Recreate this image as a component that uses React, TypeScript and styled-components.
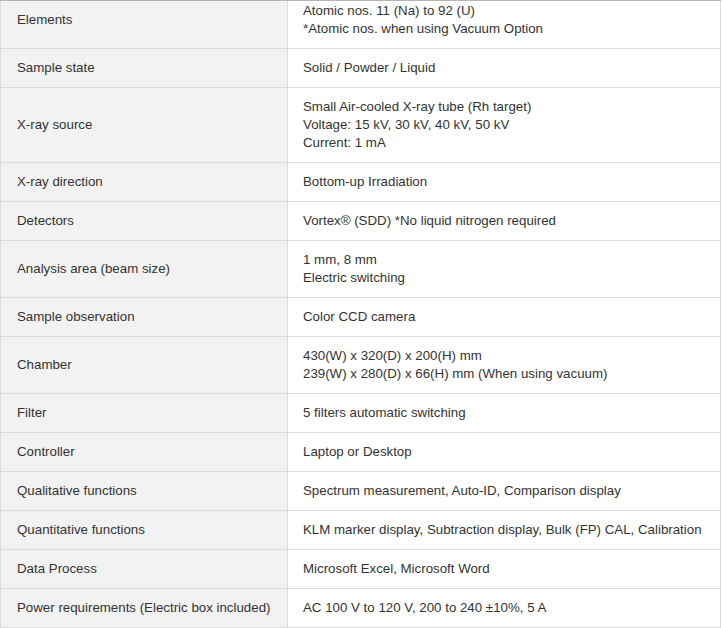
import React, { FC } from 'react';
import styled, { createGlobalStyle } from 'styled-components';

type Spec = {
  label: string;
  lines: string[];
};

const specs: Spec[] = [
  { label: 'Elements', lines: ['Atomic nos. 11 (Na) to 92 (U)', '*Atomic nos. when using Vacuum Option'] },
  { label: 'Sample state', lines: ['Solid / Powder / Liquid'] },
  {
    label: 'X-ray source',
    lines: ['Small Air-cooled X-ray tube (Rh target)', 'Voltage: 15 kV, 30 kV, 40 kV, 50 kV', 'Current: 1 mA'],
  },
  { label: 'X-ray direction', lines: ['Bottom-up Irradiation'] },
  { label: 'Detectors', lines: ['Vortex® (SDD) *No liquid nitrogen required'] },
  { label: 'Analysis area (beam size)', lines: ['1 mm, 8 mm', 'Electric switching'] },
  { label: 'Sample observation', lines: ['Color CCD camera'] },
  {
    label: 'Chamber',
    lines: ['430(W) x 320(D) x 200(H) mm', '239(W) x 280(D) x 66(H) mm (When using vacuum)'],
  },
  { label: 'Filter', lines: ['5 filters automatic switching'] },
  { label: 'Controller', lines: ['Laptop or Desktop'] },
  { label: 'Qualitative functions', lines: ['Spectrum measurement, Auto-ID, Comparison display'] },
  {
    label: 'Quantitative functions',
    lines: ['KLM marker display, Subtraction display, Bulk (FP) CAL, Calibration'],
  },
  { label: 'Data Process', lines: ['Microsoft Excel, Microsoft Word'] },
  { label: 'Power requirements (Electric box included)', lines: ['AC 100 V to 120 V, 200 to 240 ±10%, 5 A'] },
];

const GlobalStyle = createGlobalStyle`
  body {
    margin: 0;
    background: #fff;
    font-family: "Liberation Sans", Arial, sans-serif;
  }
`;

export default function App() {
  return (
    <>
      <GlobalStyle />
      <SpecTable specs={specs} />
    </>
  );
}

const SpecTable: FC<{ specs: Spec[] }> = ({ specs: rows }) => (
  <Frame>
    <Table>
      <colgroup>
        <LabelCol />
        <col />
      </colgroup>
      <tbody>
        {rows.map((row) => (
          <Row key={row.label}>
            <HeadCell>{row.label}</HeadCell>
            <Cell>
              {row.lines.map((line, i) => (
                // eslint-disable-next-line react/no-array-index-key
                <React.Fragment key={i}>
                  {i > 0 && <br />}
                  {line}
                </React.Fragment>
              ))}
            </Cell>
          </Row>
        ))}
      </tbody>
    </Table>
  </Frame>
);

const Frame = styled.div`
  width: 721px;
  border-top: 1px solid #b4b4b4;
`;

const Table = styled.table`
  width: 100%;
  border-collapse: collapse;
  table-layout: fixed;
  font-size: 13.3px;
  line-height: 18px;
  color: #333;
`;

const LabelCol = styled.col`
  width: 287px;
`;

const Row = styled.tr`
  &:first-child th,
  &:first-child td {
    border-top: none;
    padding-top: 1px;
  }
`;

const HeadCell = styled.th`
  padding: 10px 8px 10px 16px;
  border: 1px solid #dcdcdc;
  background: #f2f2f2;
  font-weight: normal;
  text-align: left;
  vertical-align: middle;
  white-space: nowrap;
`;

const Cell = styled.td`
  padding: 10px 8px 10px 15px;
  border: 1px solid #dcdcdc;
  background: #fff;
  text-align: left;
  vertical-align: middle;
  white-space: nowrap;
`;
